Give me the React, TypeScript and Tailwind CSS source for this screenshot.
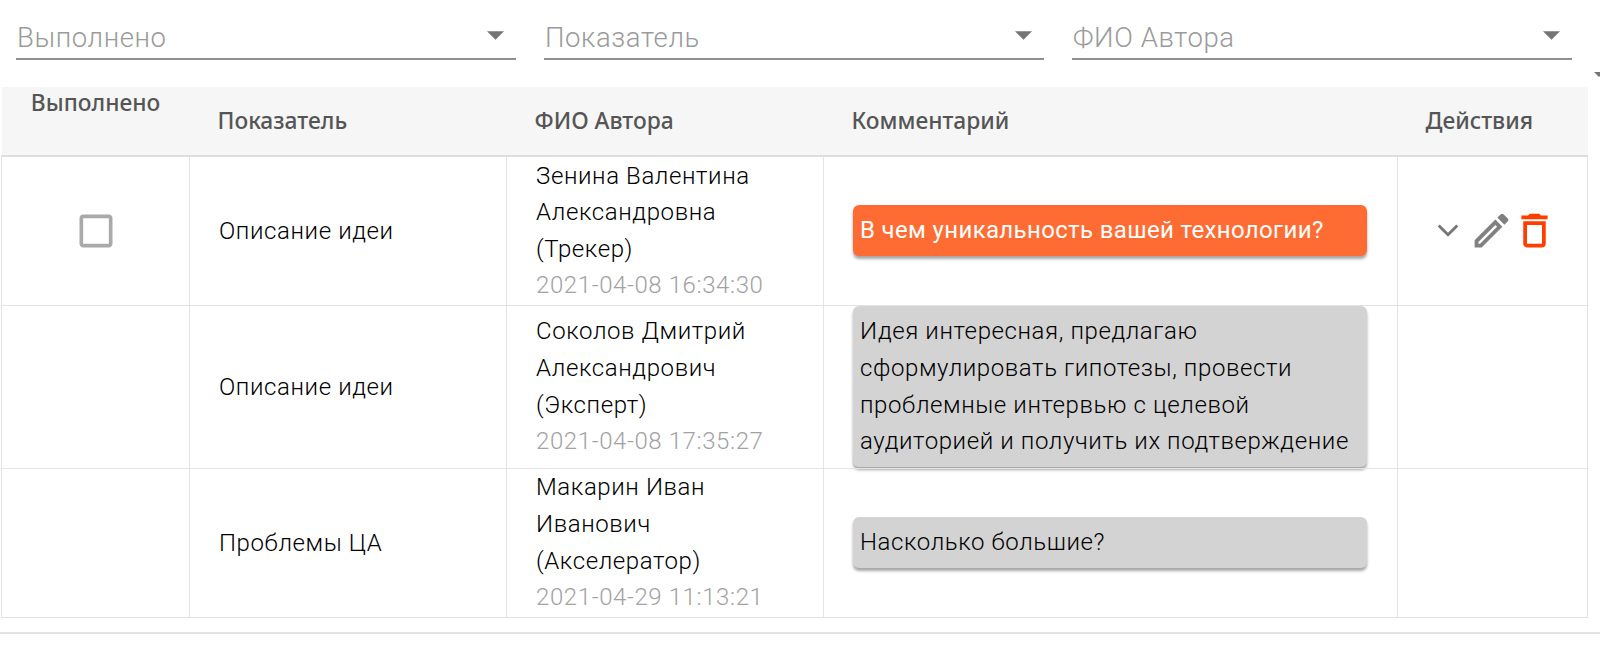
const body = "font-['Roboto',sans-serif] font-light tracking-[0.6px]";

function Arrow() {
  return (
    <svg viewBox="7 10 10 5" className="w-[17px] h-[9px] fill-[#757575] mt-[-6px] mr-[12px]">
      <path d="M7 10l5 5 5-5z" />
    </svg>
  );
}

function Select({ label }: { label: string }) {
  return (
    <div className="w-[500px] h-[60px] flex items-center justify-between border-b-2 border-[#8f8f8f] pt-[22px] pb-[4px]">
      <span className={`text-[27.5px] leading-[36px] pl-[1px] text-[#9a9a9a] ${body}`}>{label}</span>
      <Arrow />
    </div>
  );
}

function Head({ children }: { children: string }) {
  return (
    <th className="px-[28px] text-left align-middle font-['Noto_Sans',sans-serif] font-medium text-[22.8px] text-[#555555]">
      {children}
    </th>
  );
}

function Author({ name, role, date }: { name: string[]; role: string; date: string }) {
  return (
    <div className="leading-[36.6px]">
      <div className="text-black">{name[0]}</div>
      <div className="text-black">{name[1]}</div>
      <div className="text-black">{role}</div>
      <div className="text-[#a2a2a2]">{date}</div>
    </div>
  );
}

function Bubble({ children, orange }: { children: React.ReactNode; orange?: boolean }) {
  return (
    <div
      className={`w-[514px] px-[7px] py-[7px] rounded-[6px] leading-[36.6px] shadow-[0_3px_3px_rgba(0,0,0,0.35)] ${orange ? "bg-[#ff6c33] text-white font-normal tracking-[0.35px]" : "bg-[#d3d3d3] text-black"}`}
    >
      {children}
    </div>
  );
}

const cell = "border border-[#e2e2e8] align-middle p-0";

export default function App() {
  return (
    <div className="relative w-[1600px] h-[645px] overflow-hidden bg-white">
      <div className="flex gap-[28px] px-[16px]">
        <Select label="Выполнено" />
        <Select label="Показатель" />
        <Select label="ФИО Автора" />
      </div>
      <div className="absolute right-0 top-[72px] w-0 h-0 border-l-[5px] border-r-[5px] border-t-[5px] border-l-transparent border-r-transparent border-t-[#757575] mr-[-4px]" />
      <div className="pl-[1px] pt-[27px]">
        <table className={`w-[1586px] table-fixed border-collapse text-[24px] ${body}`}>
          <colgroup>
            <col className="w-[188px]" />
            <col className="w-[317px]" />
            <col className="w-[317px]" />
            <col className="w-[574px]" />
            <col className="w-[190px]" />
          </colgroup>
          <thead>
            <tr className="h-[69px] bg-[#f6f6f6] border-b-2 border-[#dedede] tracking-normal">
              <th className="align-top pb-[3px] text-center font-['Noto_Sans',sans-serif] font-medium text-[22.8px] leading-[31px] text-[#555555]">
                Выполнено
              </th>
              <Head>Показатель</Head>
              <Head>ФИО Автора</Head>
              <Head>Комментарий</Head>
              <Head>Действия</Head>
            </tr>
          </thead>
          <tbody>
            <tr className="h-[149px]">
              <td className={cell}>
                <div className="flex justify-center">
                  <svg viewBox="0 0 24 24" className="w-[44px] h-[44px] fill-[#aaaaaa]">
                    <path d="M19 5v14H5V5h14m0-2H5c-1.1 0-2 .9-2 2v14c0 1.1.9 2 2 2h14c1.1 0 2-.9 2-2V5c0-1.1-.9-2-2-2z" />
                  </svg>
                </div>
              </td>
              <td className={`${cell} pl-[29px] text-black`}>Описание идеи</td>
              <td className={`${cell} pl-[29px]`}>
                <Author name={["Зенина Валентина", "Александровна"]} role="(Трекер)" date="2021-04-08 16:34:30" />
              </td>
              <td className={`${cell} pl-[29px]`}>
                <Bubble orange>В чем уникальность вашей технологии?</Bubble>
              </td>
              <td className={cell}>
                <div className="flex items-center pl-[29px]">
                  <svg viewBox="0 0 24 24" className="w-[42px] h-[42px] fill-none stroke-[#757575] stroke-[1.6]">
                    <path d="M6.7 8.8L12 14.1l5.3-5.3" />
                  </svg>
                  <svg viewBox="0 0 24 24" className="w-[45px] h-[45px] fill-[#808080]">
                    <path d="M3 17.25V21h3.75L17.81 9.94l-3.75-3.75L3 17.25zM5.92 19H5v-.92l9.06-9.06.92.92L5.92 19zM20.71 5.63l-2.34-2.34c-.2-.2-.45-.29-.71-.29s-.51.1-.7.29l-1.83 1.83 3.75 3.75 1.83-1.83c.39-.39.39-1.02 0-1.41z" />
                  </svg>
                  <svg viewBox="0 0 24 24" className="w-[45px] h-[45px] ml-[-2px] fill-[#ff3d00]">
                    <path d="M6 19c0 1.1.9 2 2 2h8c1.1 0 2-.9 2-2V7H6v12zM8 9h8v10H8V9zm7.5-5l-1-1h-5l-1 1H5v2h14V4h-3.5z" />
                  </svg>
                </div>
              </td>
            </tr>
            <tr className="h-[163px]">
              <td className={cell} />
              <td className={`${cell} pl-[29px] text-black`}>Описание идеи</td>
              <td className={`${cell} pl-[29px]`}>
                <Author name={["Соколов Дмитрий", "Александрович"]} role="(Эксперт)" date="2021-04-08 17:35:27" />
              </td>
              <td className={`${cell} pl-[29px]`}>
                <Bubble>
                  Идея интересная, предлагаю
                  <br />
                  сформулировать гипотезы, провести
                  <br />
                  проблемные интервью с целевой
                  <br />
                  аудиторией и получить их подтверждение
                </Bubble>
              </td>
              <td className={cell} />
            </tr>
            <tr className="h-[149px]">
              <td className={cell} />
              <td className={`${cell} pl-[29px] text-black`}>Проблемы ЦА</td>
              <td className={`${cell} pl-[29px]`}>
                <Author name={["Макарин Иван", "Иванович"]} role="(Акселератор)" date="2021-04-29 11:13:21" />
              </td>
              <td className={`${cell} pl-[29px]`}>
                <Bubble>Насколько большие?</Bubble>
              </td>
              <td className={cell} />
            </tr>
          </tbody>
        </table>
      </div>
      <div className="mt-[14px] h-[2px] bg-[#e4e4e4]" />
    </div>
  );
}
